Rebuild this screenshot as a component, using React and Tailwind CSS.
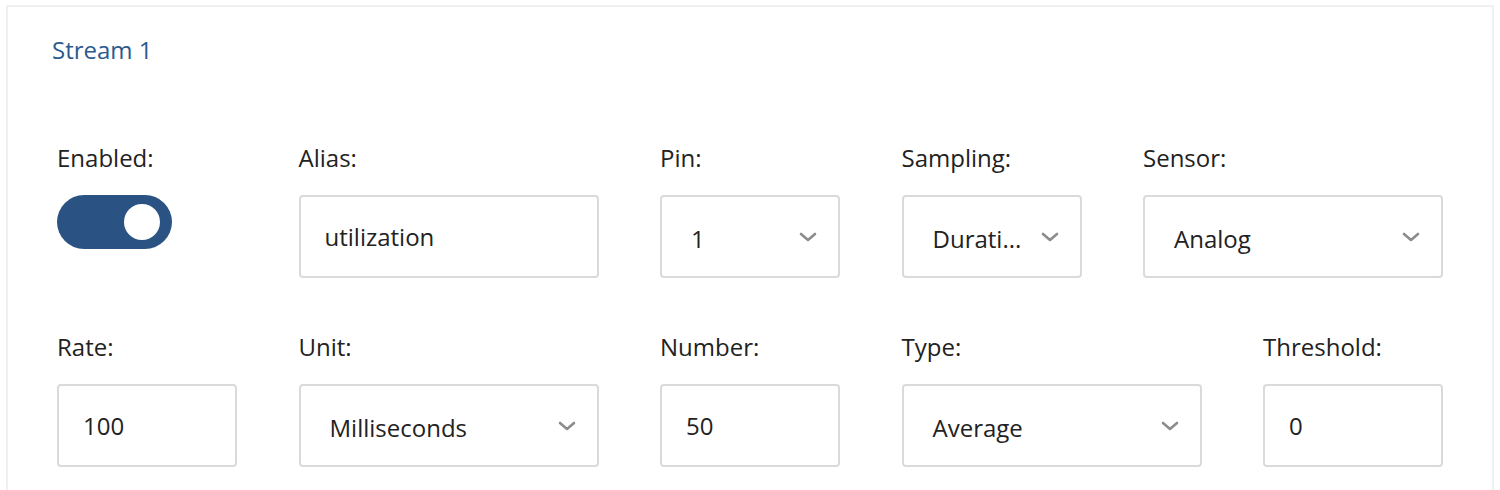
import React from 'react';

const font = { fontFamily: '"Open Sans", "Liberation Sans", sans-serif' };

function Chevron() {
  return (
    <svg width="18" height="10" viewBox="0 0 18 10" className="shrink-0">
      <polyline points="2,2 9,8 16,2" fill="none" stroke="#8c8c8c" strokeWidth="2.6" strokeLinecap="round" strokeLinejoin="round" />
    </svg>
  );
}

function Field({ label, width, children }) {
  return (
    <div className={`flex flex-col ${width}`}>
      <div className="text-[24px] leading-[32px] text-[#222]">{label}</div>
      <div className="mt-[21px]">{children}</div>
    </div>
  );
}

function TextBox({ value }) {
  return (
    <div className="flex items-center h-[83px] border-2 border-[#dadada] rounded-[4px] pl-[24px] text-[24px] text-[#222]">
      {value}
    </div>
  );
}

function SelectBox({ value }) {
  return (
    <div className="flex items-center justify-between h-[83px] border-2 border-[#dadada] rounded-[4px] pl-[29px] pr-[21px] text-[24px] text-[#222]">
      <span className="pt-[5px] whitespace-nowrap">{value}</span>
      <Chevron />
    </div>
  );
}

function Toggle() {
  return (
    <div className="flex items-center justify-end w-[115px] h-[54px] rounded-full bg-[#2a5384] pr-[12px]">
      <div className="w-[36px] h-[36px] rounded-full bg-white" />
    </div>
  );
}

export default function App() {
  return (
    <div className="min-h-screen bg-white pt-[5px] px-[6px]" style={font}>
      <div className="border-2 border-[#f0f0f0] pl-[49px] pt-[27px] pb-[40px]">
        <div className="text-[24px] leading-[32px] text-[#2b5a8e] -ml-[5px]">Stream 1</div>

        <div className="flex gap-[61.5px] mt-[76px]">
          <Field label="Enabled:" width="w-[180px]">
            <Toggle />
          </Field>
          <Field label="Alias:" width="w-[300px]">
            <TextBox value="utilization" />
          </Field>
          <Field label="Pin:" width="w-[180px]">
            <SelectBox value="1" />
          </Field>
          <Field label="Sampling:" width="w-[180px]">
            <SelectBox value="Durati..." />
          </Field>
          <Field label="Sensor:" width="w-[300px]">
            <SelectBox value="Analog" />
          </Field>
        </div>

        <div className="flex gap-[61.5px] mt-[53px]">
          <Field label="Rate:" width="w-[180px]">
            <TextBox value="100" />
          </Field>
          <Field label="Unit:" width="w-[300px]">
            <SelectBox value="Milliseconds" />
          </Field>
          <Field label="Number:" width="w-[180px]">
            <TextBox value="50" />
          </Field>
          <Field label="Type:" width="w-[300px]">
            <SelectBox value="Average" />
          </Field>
          <Field label="Threshold:" width="w-[180px]">
            <TextBox value="0" />
          </Field>
        </div>
      </div>
    </div>
  );
}
